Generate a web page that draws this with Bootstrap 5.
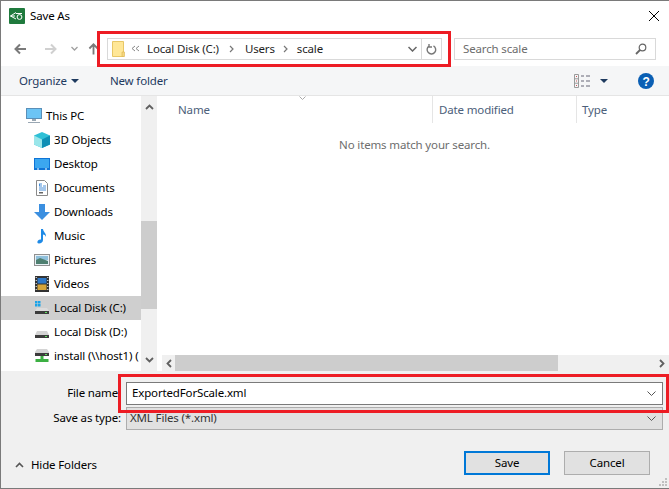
<!DOCTYPE html>
<html lang="en"><head><meta charset="utf-8"><title>Save As</title>
<link href="https://cdn.jsdelivr.net/npm/bootstrap@5.3.0/dist/css/bootstrap.min.css" rel="stylesheet">
<style>
html,body{height:100%;margin:0;overflow:hidden}
body{width:669px;height:489px;background:#fff;font:11.5px/16px "Noto Sans","Open Sans",sans-serif;letter-spacing:-.15px;color:#000}
.win{position:relative;width:669px;height:489px;border:solid #7a7a7a;border-width:1px 0 1px 1px;background:#fff;overflow:hidden}
.titlebar{height:30px;padding-left:8px}
.titlebar svg{margin-right:5px}
.titlebar .closex{margin-left:auto;margin-right:10px}
.navline{height:35px;padding-left:13px}
.ic-fwd{margin-left:17px}
.ic-drop{margin-left:14px}
.ic-up{margin-left:10px}
.addr{width:335px;height:22px;border:1px solid #d9d9d9;margin-left:8px;padding-left:4px;color:#1e1e1e}
.addr .ic-back2{margin-left:6px}
.addr .seg0{margin-left:7px}
.addr .chev1{margin-left:10px}
.addr .seg1{margin-left:11px}
.addr .chev2{margin-left:8px}
.addr .seg2{margin-left:9px}
.addr .lastcell{margin-left:auto;height:100%;display:flex;align-items:center}
.refresh{border-left:1px solid #d9d9d9;width:20px;height:100%;margin-left:4px;justify-content:center}
.srch{width:202px;height:22px;border:1px solid #d9d9d9;margin-left:12px;padding:0 8px;color:#6d6d6d}
.cmd{height:30px;background:#f5f6f7;border-bottom:1px solid #e5e5e5;padding-left:18px;color:#1e3a5f}
.cmd .newf{margin-left:31px}
.cmdright{margin-left:auto;margin-right:15px}
.ic-viewcaret{margin-left:9px}
.ic-help{margin-left:30px}
.mainarea{height:275px}
.tree{width:140px;overflow:hidden;flex:none}
.treerow{height:24px;padding-left:33px;white-space:nowrap;color:#000}
.treerow.top{padding-left:25px}
.treerow svg{flex:none;margin-right:4px}
.treerow.sel{background:#cfcfcf}
.treewrap{padding-top:8px}
.vsb{width:16px;flex:none;background:#f0f0f0;justify-content:space-between}
.vthumb{width:16px;height:88px;background:#cdcdcd;position:absolute;top:125px}
.vsbwrap{position:relative}
.files{margin-left:3px;min-width:0}
.colhead{height:27px;color:#4c607a;position:relative}
.colhead>div{height:100%;padding-left:18px;border-right:1px solid #e5e5e5;display:flex;align-items:center}
.cname{width:273px}
.cdate{width:144px;padding-left:6px!important}
.ctype{padding-left:5px!important;border-right:0!important}
.sortcaret{position:absolute;left:139px;top:0}
.empty{flex:1;text-align:center;color:#6d6d6d;padding-top:14px}
.hsb{height:16px;background:#f0f0f0;margin-left:2px}
.hthumb{width:383px;height:16px;background:#cdcdcd;margin-left:3px}
.bottompanel{height:115px;background:#f0f0f0;position:relative;border-top:1px solid #f0f0f0}
.flabel{width:120px;text-align:right;color:#000}
.frow1{height:24px;margin-top:9px}
.frow2{height:24px;margin-top:1px}
.fname{width:537px;height:23px;margin-left:5px;border:1px solid #7a7a7a;background:#fff;padding:0 6px 0 5px}
.ftype{width:537px;height:23px;margin-left:5px;border:1px solid #adadad;background:#e1e1e1;padding:0 6px 0 3px;color:#333}
.btnrow{padding:21px 19px 0 14px}
.winbtn{width:86px;height:24px;background:#e1e1e1;border:1px solid #adadad;padding:0;color:#000;font-size:11.5px;border-radius:0;line-height:20px;letter-spacing:-.15px}
.winbtn.dflt{border:2px solid #0078d7;margin-right:14px}
.hidef{color:#000;margin-top:3px}
.hidef svg{margin-right:7px}
.redbox{position:absolute;border:3px solid #ed1c24;pointer-events:none}
.r1{left:96px;top:30px;width:354px;height:36px}
.r2{left:117px;top:373px;width:551px;height:39px}
.grip{position:absolute;right:1px;bottom:1px}
</style></head><body>
<div class="win d-flex flex-column">
 <div class="titlebar d-flex align-items-center flex-shrink-0">
  <svg width="16" height="16" viewBox="0 0 16 16"><rect width="16" height="16" rx="1" fill="#1f7a3d"/><path d="M7 4.500 1.500 8 7 11M1.500 8H6M7 5.500h6" fill="none" stroke="#fff"/><circle cx="10.500" cy="9" r="2.400" fill="none" stroke="#fff"/></svg>
  <span>Save As</span>
  <svg class="closex" width="10" height="10" viewBox="0 0 10 10"><path d="M0 0l10 10M10 0 0 10" stroke="#000" fill="none"/></svg>
 </div>
 <div class="navline d-flex align-items-center flex-shrink-0">
  <svg width="13" height="12" viewBox="0 0 13 12"><path d="M12 6H2M6 1.500 1.500 6 6 10.500" fill="none" stroke="#7a7a7a" stroke-width="2"/></svg>
  <svg class="ic-fwd" width="13" height="12" viewBox="0 0 13 12"><path d="M1 6h10M7 1.500 11.500 6 7 10.500" fill="none" stroke="#d0d0d0" stroke-width="2"/></svg>
  <svg class="ic-drop" width="7" height="5" viewBox="0 0 7 5"><path d="M.5 1 3.500 4 6.500 1" fill="none" stroke="#a0a0a0" stroke-width="1.300"/></svg>
  <svg class="ic-up" width="11" height="13" viewBox="0 0 12 13"><path d="M6 13V2M1.500 6.500 6 2l4.500 4.500" fill="none" stroke="#7a7a7a" stroke-width="2"/></svg>
  <div class="addr d-flex align-items-center">
   <svg width="13" height="16" viewBox="0 0 13 16"><path d="M.5.500h11v15H.5z" fill="#ffe797" stroke="#e8c766"/><path d="M10 11h2.500v4.500H10z" fill="#f5d77f" stroke="#dcb44f" stroke-width=".6"/></svg>
   <svg class="ic-back2" width="9" height="7" viewBox="0 0 9 7"><path d="M4 1 1 3.500 4 6M8 1 5 3.500 8 6" fill="none" stroke="#888"/></svg>
   <span class="seg0">Local Disk (C:)</span>
   <svg class="chev1" width="5" height="8" viewBox="0 0 5 8"><path d="M1 1l3 3-3 3" fill="none" stroke="#777" stroke-width="1.200"/></svg>
   <span class="seg1">Users</span>
   <svg class="chev2" width="5" height="8" viewBox="0 0 5 8"><path d="M1 1l3 3-3 3" fill="none" stroke="#777" stroke-width="1.200"/></svg>
   <span class="seg2">scale</span>
   <div class="lastcell">
    <svg width="9" height="6" viewBox="0 0 9 6"><path d="M.5 1 4.500 5 8.500 1" fill="none" stroke="#666" stroke-width="1.500"/></svg>
    <div class="refresh d-flex align-items-center"><svg width="11" height="12" viewBox="0 0 11 12"><path d="M3 2.600a4.300 4.300 0 1 0 4.500-.2M3 .5v3h3" fill="none" stroke="#777" stroke-width="1.400" transform="translate(0 .5)"/></svg></div>
   </div>
  </div>
  <div class="srch d-flex align-items-center justify-content-between">
   <span>Search scale</span>
   <svg width="12" height="12" viewBox="0 0 12 12"><circle cx="7.500" cy="4.500" r="3.300" fill="none" stroke="#666" stroke-width="1.200"/><path d="M5 7 1 11" stroke="#666" stroke-width="1.800"/></svg>
  </div>
 </div>
 <div class="cmd d-flex align-items-center flex-shrink-0">
  <span>Organize</span>
  <svg class="ms-1" width="8" height="4" viewBox="0 0 8 4"><path d="M0 0h8L4 4z" fill="#1e3a5f"/></svg>
  <span class="newf">New folder</span>
  <div class="cmdright d-flex align-items-center">
   <svg width="17" height="14" viewBox="0 0 17 14"><g fill="none" stroke="#9a9a9a"><path d="M.5.500h4v13h-4zM.5 4.800h4M.5 9.200h4"/><path d="M7 2h3M12 2h4M7 7h3M12 7h4M7 12h3M12 12h4" stroke="#667"/></g><path d="M2 2h1v1H2zM2 6.500h1v1H2zM2 11h1v1H2z" fill="#c55"/></svg>
   <svg class="ic-viewcaret" width="8" height="4" viewBox="0 0 8 4"><path d="M0 0h8L4 4z" fill="#1e3a5f"/></svg>
   <svg class="ic-help" width="16" height="16" viewBox="0 0 16 16"><circle cx="8" cy="8" r="8" fill="#0a5fb4"/><text x="8" y="12.500" text-anchor="middle" font-family="Liberation Sans" font-weight="700" font-size="12" fill="#fff">?</text></svg>
  </div>
 </div>
 <div class="mainarea d-flex flex-shrink-0">
  <div class="tree"><div class="treewrap">
   <div class="treerow top d-flex align-items-center"><svg width="16" height="16" viewBox="0 0 16 16"><rect x=".5" y=".5" width="15" height="10" fill="#6cc4f5" stroke="#5a8fb8"/><path d="M6 11h4v2H6zM2 14h12v1H2z" fill="#9aa7b3"/></svg><span>This PC</span></div>
   <div class="treerow d-flex align-items-center"><svg width="16" height="16" viewBox="0 0 16 16"><path d="M8 0l8 3.500v9L8 16 0 12.500v-9z" fill="#2fc0d6"/><path d="M8 7.500 16 3.500v9L8 16z" fill="#0e8fb5"/><path d="M8 7.500 0 3.500v9L8 16z" fill="#9ae6ea"/></svg><span>3D Objects</span></div>
   <div class="treerow d-flex align-items-center"><svg width="16" height="16" viewBox="0 0 16 16"><rect y="2" width="16" height="12" fill="#0f74d6"/><rect x="1" y="3" width="14" height="9" fill="#3ba7f0"/><path d="M3 13h2M11 13h2" stroke="#fff"/></svg><span>Desktop</span></div>
   <div class="treerow d-flex align-items-center"><svg width="16" height="16" viewBox="0 0 16 16"><path d="M2.500.5h8l3 3v12h-11z" fill="#fff" stroke="#8a8a8a"/><path d="M8 4h-3l1 1-1 1h3M9 6h3M5 8h7M5 10h7" stroke="#4a90d9" fill="none"/><path d="M5 12h4v1.500H5z" fill="#666"/></svg><span>Documents</span></div>
   <div class="treerow d-flex align-items-center"><svg width="16" height="16" viewBox="0 0 16 16"><path d="M5 0h6v8h5l-8 8-8-8h5z" fill="#3b8fe0"/></svg><span>Downloads</span></div>
   <div class="treerow d-flex align-items-center"><svg width="16" height="16" viewBox="0 0 16 16"><path d="M7 1h2c.2 3 3.500 4 3 8-.8-2-1.800-2.500-3-2.600V12c0 2-2 3.500-4 3.500S3 14 4 12.500c.8-1 2-1.300 3-1z" fill="#1e8ae6"/></svg><span>Music</span></div>
   <div class="treerow d-flex align-items-center"><svg width="16" height="16" viewBox="0 0 16 16"><rect x=".5" y="2.500" width="15" height="11" fill="#e8f0f5" stroke="#909090"/><path d="M2 4h12v4H2z" fill="#8fc0dc"/><path d="M2 8l4-2 8 3v3H2z" fill="#4e7f70"/></svg><span>Pictures</span></div>
   <div class="treerow d-flex align-items-center"><svg width="16" height="16" viewBox="0 0 16 16"><rect x="1" width="14" height="16" fill="#333"/><rect x="3.500" y="2" width="9" height="5.500" fill="#2e78c8"/><rect x="3.500" y="8.500" width="9" height="5.500" fill="#d6a53a"/><path d="M1.700 1h1v1h-1zM1.700 4h1v1h-1zM1.700 7h1v1h-1zM1.700 10h1v1h-1zM1.700 13h1v1h-1zM13.300 1h1v1h-1zM13.300 4h1v1h-1zM13.300 7h1v1h-1zM13.300 10h1v1h-1zM13.300 13h1v1h-1z" fill="#fff"/></svg><span>Videos</span></div>
   <div class="treerow sel d-flex align-items-center"><svg width="16" height="16" viewBox="0 0 16 16"><path d="M1 1h2.500v2.500H1zM4 1h2.500v2.500H4zM1 4h2.500v2.500H1zM4 4h2.500v2.500H4z" fill="#1aa3e8"/><path d="M3 8h10l2 3v3H1v-3z" fill="#dcdcdc"/><rect x="1" y="11" width="14" height="3" fill="#3c3c3c"/><rect x="11" y="12" width="2" height="1" fill="#5fe05f"/></svg><span>Local Disk (C:)</span></div>
   <div class="treerow d-flex align-items-center"><svg width="16" height="16" viewBox="0 0 16 16"><path d="M3 7h10l2 4v3H1v-3z" fill="#d4d4d4"/><rect x="1" y="11" width="14" height="3" fill="#3c3c3c"/><rect x="11" y="12" width="2" height="1" fill="#5fe05f"/></svg><span>Local Disk (D:)</span></div>
   <div class="treerow d-flex align-items-center"><svg width="16" height="16" viewBox="0 0 16 16"><path d="M3 1h10l2 3v3H1V4z" fill="#d4d4d4"/><rect x="1" y="5" width="14" height="3" fill="#3c3c3c"/><rect x="11" y="6" width="2" height="1" fill="#5fe05f"/><path d="M6.500 8h3v3h5v3h-13v-3h5z" fill="#3cb043"/></svg><span>install (\\host1) (</span></div>
  </div></div>
  <div class="vsb vsbwrap d-flex flex-column align-items-center">
   <svg class="mt-2" width="9" height="6" viewBox="0 0 9 6"><path d="M1 5 4.500 1.500 8 5" fill="none" stroke="#606060" stroke-width="1.800"/></svg>
   <div class="vthumb"></div>
   <svg class="mb-2" width="9" height="6" viewBox="0 0 9 6"><path d="M1 1 4.500 4.500 8 1" fill="none" stroke="#606060" stroke-width="1.800"/></svg>
  </div>
  <div class="files flex-grow-1 d-flex flex-column">
   <div class="colhead d-flex flex-shrink-0">
    <div class="cname">Name</div><div class="cdate">Date modified</div><div class="ctype">Type</div>
    <svg class="sortcaret" width="7" height="4" viewBox="0 0 7 4"><path d="M.5.500 3.500 3.500 6.500.5" fill="none" stroke="#aaa"/></svg>
   </div>
   <div class="empty">No items match your search.</div>
   <div class="hsb d-flex align-items-center flex-shrink-0">
    <svg class="ms-1" width="6" height="9" viewBox="0 0 6 9"><path d="M5 1 1.500 4.500 5 8" fill="none" stroke="#606060" stroke-width="1.800"/></svg>
    <div class="hthumb"></div>
    <svg class="ms-auto me-1" width="6" height="9" viewBox="0 0 6 9"><path d="M1 1 4.500 4.500 1 8" fill="none" stroke="#606060" stroke-width="1.800"/></svg>
   </div>
  </div>
 </div>
 <div class="bottompanel flex-grow-1 d-flex flex-column">
  <div class="frow1 d-flex align-items-center"><div class="flabel">File name:</div><div class="fname d-flex align-items-center justify-content-between"><span>ExportedForScale.xml</span><svg width="9" height="5" viewBox="0 0 9 5"><path d="M.5.500 4.500 4.500 8.500.5" fill="none" stroke="#555"/></svg></div></div>
  <div class="frow2 d-flex align-items-center"><div class="flabel">Save as type:</div><div class="ftype d-flex align-items-center justify-content-between"><span>XML Files (*.xml)</span><svg width="9" height="5" viewBox="0 0 9 5"><path d="M.5.500 4.500 4.500 8.500.5" fill="none" stroke="#555"/></svg></div></div>
  <div class="btnrow d-flex align-items-center">
   <div class="hidef d-flex align-items-center"><svg width="9" height="6" viewBox="0 0 9 6"><path d="M1 5 4.500 1.500 8 5" fill="none" stroke="#555" stroke-width="1.600"/></svg><span>Hide Folders</span></div>
   <button type="button" class="btn winbtn dflt ms-auto">Save</button>
   <button type="button" class="btn winbtn">Cancel</button>
  </div>
  <svg class="grip" width="10" height="10" viewBox="0 0 10 10"><path d="M7 1h2v2H7zM4 4h2v2H4zM7 4h2v2H7zM1 7h2v2H1zM4 7h2v2H4zM7 7h2v2H7z" fill="#c0c0c0"/></svg>
 </div>
 <div class="redbox r1"></div>
 <div class="redbox r2"></div>
</div>
</body></html>
